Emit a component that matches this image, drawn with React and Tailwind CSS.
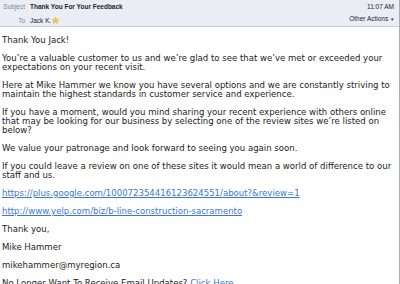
import React from 'react';

const Star = () => (
  <svg width="7" height="7" viewBox="0 0 10 10" className="inline-block ml-[1px] -mt-[2px]">
    <path d="M5 0.4l1.4 3 3.2.3-2.4 2.2.7 3.2L5 7.5 2.1 9.1l.7-3.2L.4 3.7l3.2-.3z" fill="#f7c531" stroke="#d9a520" strokeWidth="0.6" />
  </svg>
);

const Header = () => (
  <div className="h-[27px] bg-[#eaeef4] border-b border-[#c9d0d9] flex justify-between text-[6.5px] font-['Liberation_Sans',sans-serif] text-[#1a2433]">
    <div className="grid grid-cols-[23px_1fr] gap-x-[5px] gap-y-[5px] pt-[3px] pl-[2px] leading-[7px]">
      <span className="text-right text-[#7a8594]">Subject</span>
      <span className="font-bold">Thank You For Your Feedback</span>
      <span className="text-right text-[#7a8594]">To</span>
      <span>Jack K.<Star /></span>
    </div>
    <div className="flex flex-col items-end gap-y-[5px] pt-[3px] pr-[5px] leading-[7px]">
      <span>11:07 AM</span>
      <span>Other Actions <span className="text-[5px] ml-[1px]">▾</span></span>
    </div>
  </div>
);

const A = ({ children }) => (
  <a className="text-[#3a77d3] underline" href="#">{children}</a>
);

export default function App() {
  return (
    <div className="w-[400px] h-[284px] overflow-hidden bg-white border-r border-[#a9adb3]">
      <Header />
      <div className="pl-[2px] pr-[2px] pt-[9px] font-['DejaVu_Sans',Verdana,sans-serif] text-[8.55px] leading-[9px] text-[#1b1b1b] [&>p]:mb-[9px]">
        <p>Thank You Jack!</p>
        <p>You’re a valuable customer to us and we’re glad to see that we’ve met or exceeded your<br />expectations on your recent visit.</p>
        <p>Here at Mike Hammer we know you have several options and we are constantly striving to<br />maintain the highest standards in customer service and experience.</p>
        <p>If you have a moment, would you mind sharing your recent experience with others online<br />that may be looking for our business by selecting one of the review sites we’re listed on<br />below?</p>
        <p>We value your patronage and look forward to seeing you again soon.</p>
        <p>If you could leave a review on one of these sites it would mean a world of difference to our<br />staff and us.</p>
        <p><A>https://plus.google.com/100072354416123624551/about?&amp;review=1</A></p>
        <p><A>http://www.yelp.com/biz/b-line-construction-sacramento</A></p>
        <p>Thank you,</p>
        <p>Mike Hammer</p>
        <p>mikehammer@myregion.ca</p>
        <p className="whitespace-nowrap">No Longer Want To Receive Email Updates? <A>Click Here</A></p>
      </div>
    </div>
  );
}
